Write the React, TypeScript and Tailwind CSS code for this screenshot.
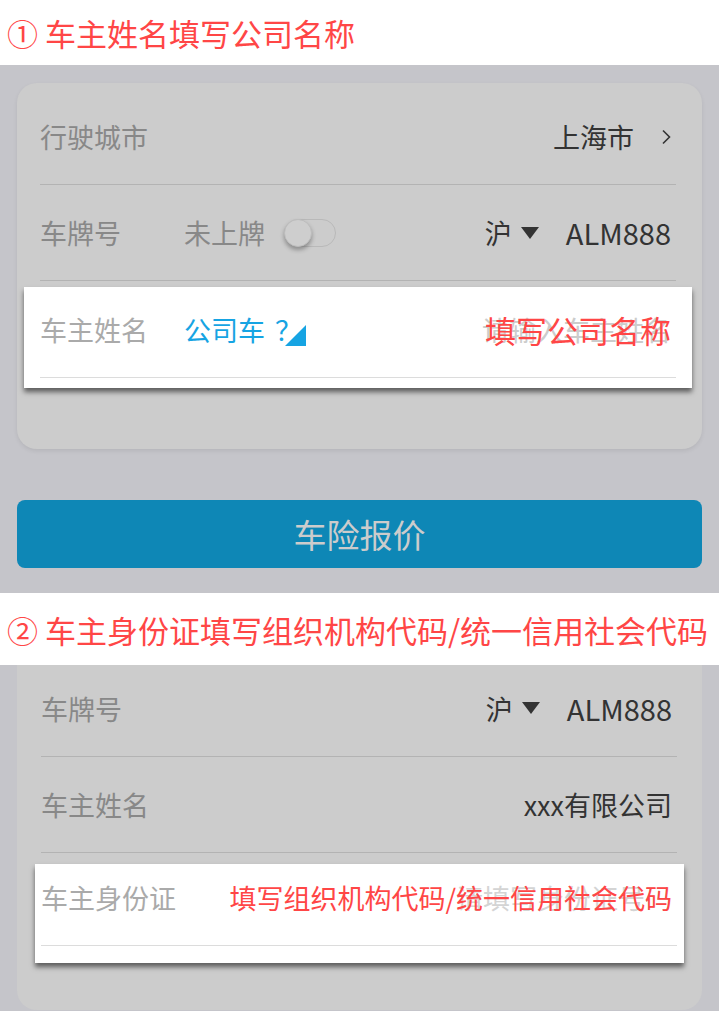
import React from 'react'

function Chevron() {
  return (
    <svg viewBox="0 0 10 16" className="w-[10px] h-[16px] ml-[27px]" fill="none" stroke="#333" strokeWidth="1.6">
      <path d="M2 1.5 L8.5 8 L2 14.5" />
    </svg>
  )
}

function Caret() {
  return (
    <svg viewBox="0 0 18 12" className="w-[18px] h-[12px] ml-[9px]">
      <path d="M0 0 H18 L9 12 Z" fill="#333" />
    </svg>
  )
}

function Toggle() {
  return (
    <div className="ml-[19px] w-[52px] h-[28px] rounded-full border border-[#b9b9b9] bg-[#cccccc] relative">
      <div className="absolute -left-px -top-px w-[28px] h-[28px] rounded-full bg-[#cecece] border border-[#bdbdbd] shadow-[0_3px_4px_rgba(0,0,0,0.3)]" />
    </div>
  )
}

function Plate() {
  return (
    <div className="flex items-center text-[#333]">
      <span>沪</span>
      <Caret />
      <span className="ml-[27px] text-[29px]">ALM888</span>
    </div>
  )
}

export default function App() {
  return (
    <div className="w-[719px] min-h-[1011px] bg-[#c5c5ca] font-['Noto_Sans_CJK_SC','Microsoft_YaHei',sans-serif] leading-none overflow-hidden">
      <div className="h-[65px] bg-white flex items-center pl-[7px] text-[31px] text-[#ff4646] whitespace-nowrap">
        ① 车主姓名填写公司名称
      </div>

      <div className="px-[17px] pt-[18px]">
        <div className="rounded-[20px] bg-[#cccccc] shadow-[0_2px_4px_rgba(0,0,0,0.08)] pl-[23px] pr-[26px] pt-[6px] pb-[61px] text-[27px]">
          <div className="h-[96px] flex items-center justify-between border-b border-[#b3b3b3] pr-[5px]">
            <span className="text-[#888]">行驶城市</span>
            <div className="flex items-center text-[#333]">
              <span>上海市</span>
              <Chevron />
            </div>
          </div>
          <div className="h-[96px] flex items-center justify-between border-b border-[#b3b3b3] pr-[5px]">
            <div className="flex items-center">
              <span className="w-[144px] text-[#888]">车牌号</span>
              <span className="text-[#888]">未上牌</span>
              <Toggle />
            </div>
            <Plate />
          </div>
          <div className="mt-[6px] -mx-[16px] px-[16px] pb-[10px] bg-white shadow-[0_4px_5px_rgba(0,0,0,0.55)]">
            <div className="h-[91px] flex items-center justify-between border-b border-[#dcdcdc] pr-[5px] pb-[6px]">
              <div className="flex items-center">
                <span className="w-[144px] text-[#aaa]">车主姓名</span>
                <span className="text-[#16a4e3]">公司车</span>
                <span className="ml-[10px] w-[27px] text-[#16a4e3]">？</span>
                <svg viewBox="0 0 21 21" className="w-[21px] h-[21px] self-end -mb-[3px] -ml-[17px]">
                  <path d="M21 0 V21 H0 Z" fill="#16a4e3" />
                </svg>
              </div>
              <div className="relative flex items-center">
                <span className="absolute right-0 text-[27px] text-[#cccccc] whitespace-nowrap">请输入车主姓名</span>
                <span className="relative text-[31px] text-[#ff4646] whitespace-nowrap">填写公司名称</span>
              </div>
            </div>
          </div>
        </div>
      </div>

      <div className="px-[17px] pt-[51px] pb-[25px]">
        <div className="h-[68px] rounded-[8px] bg-[#0e87b6] flex items-center justify-center text-[33px] text-[#cccccc]">
          车险报价
        </div>
      </div>

      <div className="h-[72px] bg-white flex items-center pl-[7px] text-[31px] text-[#ff4646] whitespace-nowrap">
        ② 车主身份证填写组织机构代码/统一信用社会代码
      </div>

      <div className="px-[17px]">
        <div className="rounded-b-[20px] bg-[#cccccc] pl-[24px] pr-[25px] pb-[47px] text-[27px]">
          <div className="h-[92px] flex items-center justify-between border-b border-[#b3b3b3] pr-[5px] pb-[5px]">
            <span className="text-[#888]">车牌号</span>
            <Plate />
          </div>
          <div className="h-[96px] flex items-center justify-between border-b border-[#b3b3b3] pr-[5px]">
            <span className="text-[#888]">车主姓名</span>
            <span className="text-[#333]">xxx有限公司</span>
          </div>
          <div className="mt-[11px] -ml-[6px] -mr-[7px] pl-[6px] pr-[7px] pb-[17px] bg-white shadow-[0_4px_5px_rgba(0,0,0,0.55)]">
            <div className="h-[82px] flex items-center justify-between border-b border-[#dcdcdc] pr-[5px] pb-[15px]">
              <span className="text-[#aaa]">车主身份证</span>
              <div className="relative flex items-center">
                <span className="absolute right-0 text-[27px] text-[#d4d4d4] whitespace-nowrap">请填写身份证号码</span>
                <span className="relative text-[27px] text-[#ff4646] whitespace-nowrap">填写组织机构代码/统一信用社会代码</span>
              </div>
            </div>
          </div>
        </div>
      </div>
    </div>
  )
}
